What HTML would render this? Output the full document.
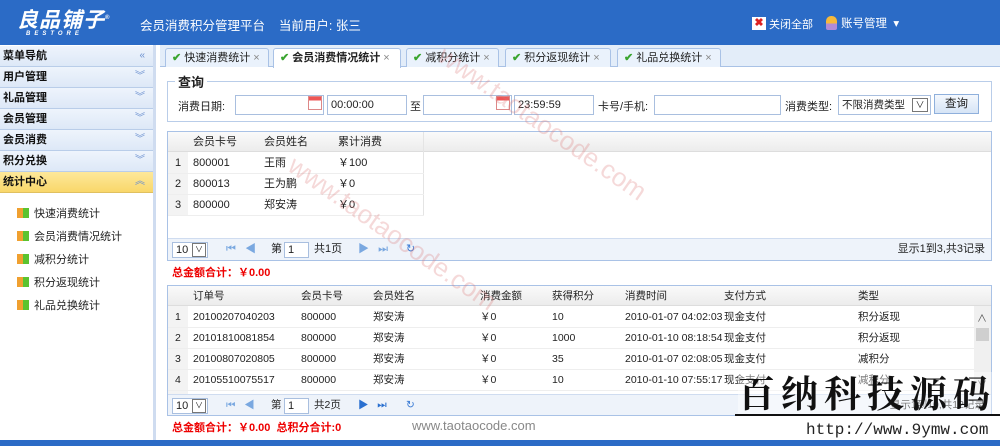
<!DOCTYPE html>
<html><head><meta charset="utf-8"><style>
*{margin:0;padding:0;box-sizing:border-box}
body{width:1000px;height:446px;overflow:hidden;position:relative;background:#fff;font-family:"Liberation Sans","Noto Sans CJK SC",sans-serif;font-size:11px;color:#222}
.a{position:absolute}
.hdr{left:0;top:0;width:1000px;height:45px;background:#2b6bc6}
.side{left:0;top:45px;width:156px;height:396px;background:#fff;border-right:3px solid #cfdcf0}
.mh{position:absolute;left:0;width:153px;height:21px;background:linear-gradient(#eef4fc,#dde8f7);border-bottom:1px solid #b9cde9;font-weight:bold;font-size:11px;line-height:20px;padding-left:3px;color:#111}
.mh i{position:absolute;right:8px;top:0;font-style:normal;color:#6a8fcf;font-weight:normal;font-size:10px}
.it{position:absolute;left:17px;font-size:11px;color:#222}
.it b{display:inline-block;width:12px;height:10px;margin-right:5px;vertical-align:-1px;background:linear-gradient(90deg,#f0a030 50%,#5bc32f 50%)}
.tabs{left:160px;top:45px;width:840px;height:22px;background:#e3edf9;border-bottom:1px solid #a9c2e6}
.tab{position:absolute;top:3px;height:19px;border:1px solid #a9c2e6;border-bottom:none;border-radius:3px 3px 0 0;background:#eaf2fc;font-size:11px;line-height:18px;padding-left:6px;color:#222}
.tab.on{background:#fff;height:20px;font-weight:bold}
.tab .ck{color:#3aa52f;font-weight:bold;margin-right:3px}
.tab .x{color:#888;margin-left:3px;font-weight:normal}
.fs{left:167px;top:81px;width:825px;height:41px;border:1px solid #b9cde9}
.inp{position:absolute;height:20px;border:1px solid #a9bfdf;background:#fff;line-height:18px;padding-left:3px}
.grid{border:1px solid #a9c2e6;background:#fff;overflow:hidden}
.gh{position:absolute;left:0;top:0;right:0;height:20px;background:linear-gradient(#fafafa,#ececec);border-bottom:1px solid #ddd}
.c{position:absolute;line-height:20px;white-space:nowrap}
.g2 .c{font-size:10.5px}
.rl{position:absolute;left:0;right:0;height:1px;background:#eee}
.pager{position:absolute;left:0;right:0;height:22px;background:#eef3fa;border-top:1px solid #cfdcf0}
.red{color:#e00;font-weight:bold;font-size:11px}
</style></head><body>
<div class="a hdr">
 <div class="a" style="left:17px;top:4px;color:#fff;font-size:21px;font-weight:bold;font-style:italic;letter-spacing:1px">良品铺子<sup style="font-size:6px">®</sup></div>
 <div class="a" style="left:26px;top:31px;color:#fff;font-size:6px;font-weight:bold;letter-spacing:4px;font-style:italic">BESTORE</div>
 <div class="a" style="left:140px;top:15px;color:#fff;font-size:12.5px">会员消费积分管理平台 &nbsp; &nbsp;当前用户: 张三</div>
 <div class="a" style="left:752px;top:17px;width:14px;height:13px;background:#fff;color:#d22;font-size:11px;line-height:13px;text-align:center;font-weight:bold">✖</div>
 <div class="a" style="left:769px;top:16px;color:#fff;font-size:11px">关闭全部</div>
 <div class="a" style="left:826px;top:16px;width:11px;height:14px;border-radius:5px 5px 2px 2px;background:linear-gradient(#f6b93b 55%,#b08bd8 55%)"></div>
 <div class="a" style="left:841px;top:15px;color:#fff;font-size:11.5px">账号管理 &nbsp;▾</div>
</div>
<div class="a side">
 <div class="mh" style="top:1px">菜单导航<i>«</i></div>
 <div class="mh" style="top:22px">用户管理<i>︾</i></div>
 <div class="mh" style="top:43px">礼品管理<i>︾</i></div>
 <div class="mh" style="top:64px">会员管理<i>︾</i></div>
 <div class="mh" style="top:85px">会员消费<i>︾</i></div>
 <div class="mh" style="top:106px">积分兑换<i>︾</i></div>
 <div class="mh" style="top:127px;background:linear-gradient(#fde89a,#f9d76a);border-bottom:1px solid #e0c060">统计中心<i>︽</i></div>
 <div class="it" style="top:160px"><b></b>快速消费统计</div>
 <div class="it" style="top:183px"><b></b>会员消费情况统计</div>
 <div class="it" style="top:206px"><b></b>减积分统计</div>
 <div class="it" style="top:229px"><b></b>积分返现统计</div>
 <div class="it" style="top:252px"><b></b>礼品兑换统计</div>
</div>
<div class="a tabs">
 <div class="tab" style="left:5px;width:104px"><span class="ck">✔</span>快速消费统计<span class="x">×</span></div>
 <div class="tab on" style="left:113px;width:128px"><span class="ck">✔</span>会员消费情况统计<span class="x">×</span></div>
 <div class="tab" style="left:246px;width:93px"><span class="ck">✔</span>减积分统计<span class="x">×</span></div>
 <div class="tab" style="left:345px;width:106px"><span class="ck">✔</span>积分返现统计<span class="x">×</span></div>
 <div class="tab" style="left:457px;width:104px"><span class="ck">✔</span>礼品兑换统计<span class="x">×</span></div>
</div>
<div class="a fs"></div>
<div class="a" style="left:175px;top:72px;background:#fff;padding:0 3px;font-size:13px;font-weight:bold">查询</div>
<div class="a" style="left:178px;top:98px">消费日期:</div>
<div class="inp" style="left:235px;top:95px;width:89px"></div>
<div class="a" style="left:308px;top:96px;width:14px;height:14px;border:1px solid #d88;background:linear-gradient(#e55 30%,#fff 30%)"></div>
<div class="inp" style="left:327px;top:95px;width:80px">00:00:00</div>
<div class="a" style="left:410px;top:98px">至</div>
<div class="inp" style="left:423px;top:95px;width:89px"></div>
<div class="a" style="left:496px;top:96px;width:14px;height:14px;border:1px solid #d88;background:linear-gradient(#e55 30%,#fff 30%)"></div>
<div class="inp" style="left:514px;top:95px;width:80px">23:59:59</div>
<div class="a" style="left:598px;top:98px">卡号/手机:</div>
<div class="inp" style="left:654px;top:95px;width:127px"></div>
<div class="a" style="left:785px;top:98px">消费类型:</div>
<div class="inp" style="left:838px;top:95px;width:93px;font-size:10.5px">不限消费类型<span style="position:absolute;right:2px;top:2px;width:16px;height:14px;border:1px solid #777;line-height:12px;text-align:center;font-size:9px">∨</span></div>
<div class="a" style="left:934px;top:94px;width:45px;height:20px;border:1px solid #8fb0dc;background:linear-gradient(#f4f8fd,#d6e4f6);text-align:center;line-height:18px;font-size:11.5px">查询</div>

<div class="a grid" style="left:167px;top:131px;width:825px;height:130px">
 <div class="gh"></div>
 <div class="c" style="left:25px;top:0">会员卡号</div><div class="c" style="left:96px;top:0">会员姓名</div><div class="c" style="left:170px;top:0">累计消费</div>
 <div class="a" style="left:0;top:20px;width:20px;height:63px;background:#f3f3f3"></div>
 <div class="a" style="left:255px;top:0;width:1px;height:83px;background:#e4e4e4"></div>
 <div class="rl" style="top:41px;width:256px"></div><div class="rl" style="top:62px;width:256px"></div><div class="rl" style="top:83px;width:256px"></div>
 <div class="c" style="left:7px;top:21px">1</div><div class="c" style="left:25px;top:21px">800001</div><div class="c" style="left:96px;top:21px">王雨</div><div class="c" style="left:170px;top:21px">￥100</div>
 <div class="c" style="left:7px;top:42px">2</div><div class="c" style="left:25px;top:42px">800013</div><div class="c" style="left:96px;top:42px">王为鹏</div><div class="c" style="left:170px;top:42px">￥0</div>
 <div class="c" style="left:7px;top:63px">3</div><div class="c" style="left:25px;top:63px">800000</div><div class="c" style="left:96px;top:63px">郑安涛</div><div class="c" style="left:170px;top:63px">￥0</div>
 <div class="pager" style="top:106px">
  <div class="inp" style="left:4px;top:3px;width:36px;height:16px;line-height:14px">10<span style="position:absolute;right:1px;top:0;width:14px;height:14px;border:1px solid #777;font-size:8px;line-height:12px;text-align:center">∨</span></div>
  <div class="c" style="left:58px;top:0;color:#7aa8e0">⏮ &nbsp; ◀</div>
  <div class="c" style="left:103px;top:0">第</div><div class="inp" style="left:116px;top:3px;width:25px;height:16px;line-height:14px">1</div><div class="c" style="left:146px;top:0">共1页</div>
  <div class="c" style="left:190px;top:0;color:#7aa8e0">▶ &nbsp; ⏭</div><div class="c" style="left:238px;top:0;color:#3a7bd5">↻</div>
  <div class="c" style="right:6px;top:0">显示1到3,共3记录</div>
 </div>
</div>
<div class="a red" style="left:172px;top:264px">总金额合计：￥0.00</div>

<div class="a grid g2" style="left:167px;top:285px;width:825px;height:131px">
 <div class="gh"></div>
 <div class="c" style="left:25px;top:0">订单号</div><div class="c" style="left:133px;top:0">会员卡号</div><div class="c" style="left:205px;top:0">会员姓名</div><div class="c" style="left:312px;top:0">消费金额</div><div class="c" style="left:384px;top:0">获得积分</div><div class="c" style="left:457px;top:0">消费时间</div><div class="c" style="left:556px;top:0">支付方式</div><div class="c" style="left:690px;top:0">类型</div>
 <div class="a" style="left:0;top:20px;width:20px;height:90px;background:#f3f3f3"></div>
 <div class="rl" style="top:41px;right:17px"></div><div class="rl" style="top:62px;right:17px"></div><div class="rl" style="top:83px;right:17px"></div><div class="rl" style="top:104px;right:17px"></div>
 <div class="a" style="right:0;top:20px;width:17px;height:88px;background:#f0f0f0"><div style="position:absolute;left:3px;top:4px;font-size:10px;color:#555">∧</div><div style="position:absolute;left:2px;top:22px;width:13px;height:13px;background:#cfcfcf"></div><div style="position:absolute;left:3px;top:70px;font-size:10px;color:#555">∨</div></div>
 <div class="c" style="left:7px;top:21px">1</div><div class="c" style="left:25px;top:21px">20100207040203</div><div class="c" style="left:133px;top:21px">800000</div><div class="c" style="left:205px;top:21px">郑安涛</div><div class="c" style="left:312px;top:21px">￥0</div><div class="c" style="left:384px;top:21px">10</div><div class="c" style="left:457px;top:21px">2010-01-07 04:02:03</div><div class="c" style="left:556px;top:21px">现金支付</div><div class="c" style="left:690px;top:21px">积分返现</div>
 <div class="c" style="left:7px;top:42px">2</div><div class="c" style="left:25px;top:42px">20101810081854</div><div class="c" style="left:133px;top:42px">800000</div><div class="c" style="left:205px;top:42px">郑安涛</div><div class="c" style="left:312px;top:42px">￥0</div><div class="c" style="left:384px;top:42px">1000</div><div class="c" style="left:457px;top:42px">2010-01-10 08:18:54</div><div class="c" style="left:556px;top:42px">现金支付</div><div class="c" style="left:690px;top:42px">积分返现</div>
 <div class="c" style="left:7px;top:63px">3</div><div class="c" style="left:25px;top:63px">20100807020805</div><div class="c" style="left:133px;top:63px">800000</div><div class="c" style="left:205px;top:63px">郑安涛</div><div class="c" style="left:312px;top:63px">￥0</div><div class="c" style="left:384px;top:63px">35</div><div class="c" style="left:457px;top:63px">2010-01-07 02:08:05</div><div class="c" style="left:556px;top:63px">现金支付</div><div class="c" style="left:690px;top:63px">减积分</div>
 <div class="c" style="left:7px;top:84px">4</div><div class="c" style="left:25px;top:84px">20105510075517</div><div class="c" style="left:133px;top:84px">800000</div><div class="c" style="left:205px;top:84px">郑安涛</div><div class="c" style="left:312px;top:84px">￥0</div><div class="c" style="left:384px;top:84px">10</div><div class="c" style="left:457px;top:84px">2010-01-10 07:55:17</div><div class="c" style="left:556px;top:84px">现金支付</div><div class="c" style="left:690px;top:84px">减积分</div>
 <div class="c" style="left:7px;top:105px">5</div><div class="c" style="left:25px;top:105px">20105510075523</div><div class="c" style="left:133px;top:105px">800000</div><div class="c" style="left:205px;top:105px">郑安涛</div>
 <div class="pager" style="top:108px">
  <div class="inp" style="left:4px;top:3px;width:36px;height:16px;line-height:14px">10<span style="position:absolute;right:1px;top:0;width:14px;height:14px;border:1px solid #777;font-size:8px;line-height:12px;text-align:center">∨</span></div>
  <div class="c" style="left:58px;top:0;color:#7aa8e0">⏮ &nbsp; ◀</div>
  <div class="c" style="left:103px;top:0">第</div><div class="inp" style="left:116px;top:3px;width:25px;height:16px;line-height:14px">1</div><div class="c" style="left:146px;top:0">共2页</div>
  <div class="c" style="left:190px;top:0;color:#2a70d0">▶ &nbsp; ⏭</div><div class="c" style="left:238px;top:0;color:#3a7bd5">↻</div>
  <div class="c" style="right:6px;top:0">显示1到10,共12记录</div>
 </div>
</div>
<div class="a red" style="left:172px;top:419px">总金额合计：￥0.00 &nbsp;总积分合计:0</div>
<div class="a" style="left:412px;top:418px;color:#888;font-size:13px">www.taotaocode.com</div>

<div class="a" style="left:0;top:440px;width:1000px;height:6px;background:#2b6bc6"></div>

<div class="a" style="left:300px;top:150px;color:rgba(220,120,120,.28);font-size:26px;transform:rotate(35deg);transform-origin:left top;white-space:nowrap">www.taotaocode.com</div>
<div class="a" style="left:450px;top:40px;color:rgba(220,120,120,.28);font-size:26px;transform:rotate(35deg);transform-origin:left top;white-space:nowrap">www.taotaocode.com</div>

<div class="a" style="left:738px;top:372px;width:262px;height:44px;background:rgba(255,255,255,.4)"></div>
<div class="a" style="left:738px;top:368px;font-family:'Noto Serif CJK SC',serif;font-size:37px;font-weight:bold;color:#111;letter-spacing:6px;white-space:nowrap;line-height:46px">百纳科技源码</div>
<div class="a" style="left:735px;top:414px;width:265px;height:2px;background:#111"></div>
<div class="a" style="left:806px;top:421px;font-family:'Liberation Mono',monospace;font-size:16px;color:#222">http://www.9ymw.com</div>
</body></html>
